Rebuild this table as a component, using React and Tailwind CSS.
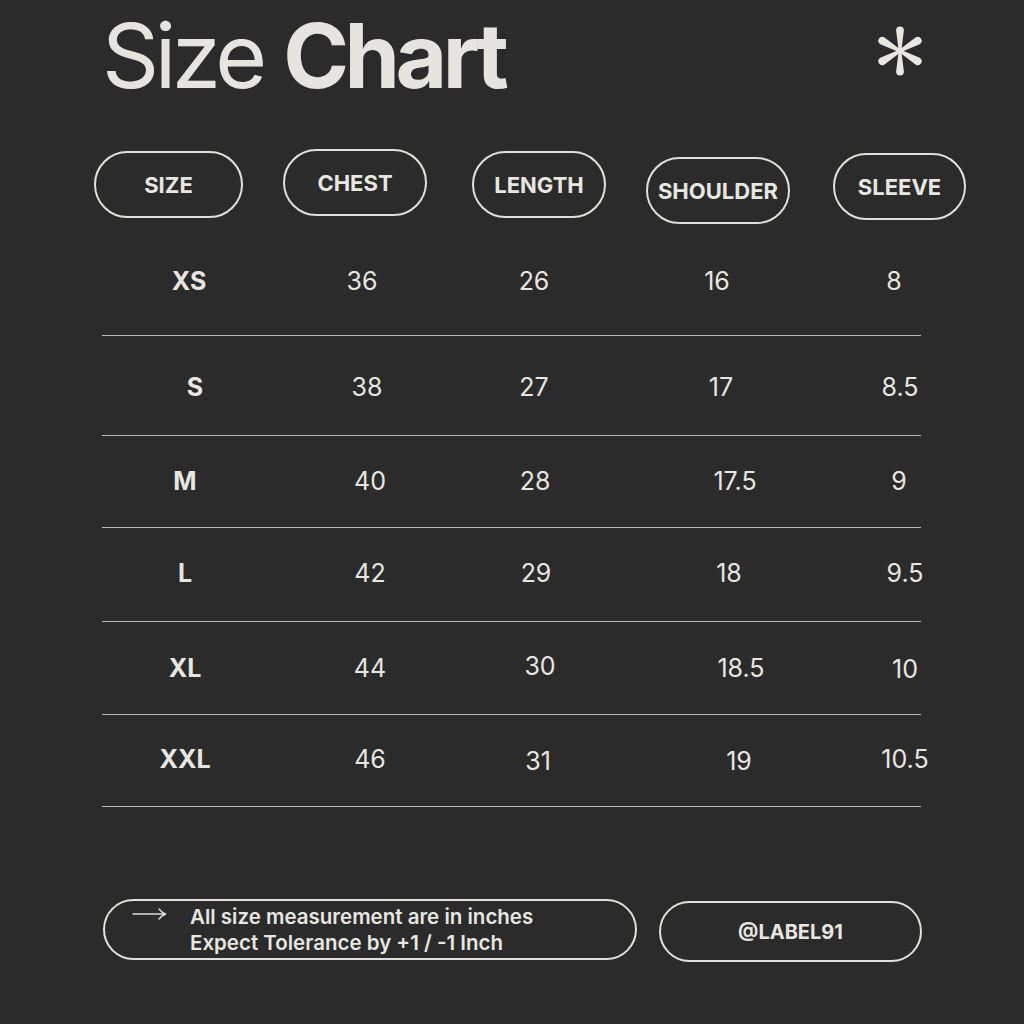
import React from "react";

const rows = [
  {
    h: "h-[109px]",
    cells: [
      ["XS", "translate-x-[4px]"],
      ["36", "-translate-x-[8px]"],
      ["26", "-translate-x-[1px]"],
      ["16", "-translate-x-[13px]"],
      ["8", "-translate-x-[6px]"],
    ],
  },
  {
    h: "h-[100px]",
    cells: [
      ["S", "translate-x-[10px] translate-y-[2px]"],
      ["38", "-translate-x-[3px] translate-y-[2px]"],
      ["27", "-translate-x-[1px] translate-y-[2px]"],
      ["17", "-translate-x-[9px] translate-y-[2px]"],
      ["8.5", "translate-y-[2px]"],
    ],
  },
  {
    h: "h-[92px]",
    cells: [
      ["M", ""],
      ["40", ""],
      ["28", ""],
      ["17.5", "translate-x-[5px]"],
      ["9", "-translate-x-[1px]"],
    ],
  },
  {
    h: "h-[94px]",
    cells: [
      ["L", "-translate-y-[1px]"],
      ["42", "-translate-y-[1px]"],
      ["29", "translate-x-[1px] -translate-y-[1px]"],
      ["18", "-translate-x-[1px] -translate-y-[1px]"],
      ["9.5", "translate-x-[5px] -translate-y-[1px]"],
    ],
  },
  {
    h: "h-[93px]",
    cells: [
      ["XL", ""],
      ["44", ""],
      ["30", "translate-x-[5px] -translate-y-[2px]"],
      ["18.5", "translate-x-[11px]"],
      ["10", "translate-x-[5px] translate-y-[1px]"],
    ],
  },
  {
    h: "h-[92px]",
    cells: [
      ["XXL", "-translate-y-[1px]"],
      ["46", "-translate-y-[1px]"],
      ["31", "translate-x-[3px] translate-y-[1px]"],
      ["19", "translate-x-[9px] translate-y-[1px]"],
      ["10.5", "translate-x-[5px] -translate-y-[1px]"],
    ],
  },
];

function Asterisk() {
  const arm = "M -1.3 0 L -3.9 -20.5 A 3.9 3.9 0 0 1 3.9 -20.5 L 1.3 0 Z";
  return (
    <svg width="44" height="50" viewBox="0 0 44 50" className="mt-[15px] shrink-0">
      <g transform="translate(22 25)" fill="#e8e6e0">
        {[0, 60, 120, 180, 240, 300].map((a) => (
          <path key={a} d={arm} transform={`rotate(${a})`} />
        ))}
        <circle r="2.2" />
      </g>
    </svg>
  );
}

function Pill({ children, cls }) {
  return (
    <div
      className={`h-[67px] rounded-full border-2 border-[#e2e0da] flex items-center justify-center text-[22px] leading-none font-bold text-[#e8e6e0] ${cls}`}
    >
      {children}
    </div>
  );
}

export default function App() {
  return (
    <div
      className="w-[1024px] h-[1024px] bg-[#2b2b2b] overflow-hidden text-[#e8e6e0]"
      style={{ fontFamily: "Inter, 'Noto Sans', sans-serif" }}
    >
      {/* Title */}
      <div className="flex items-start justify-between pl-[102px] pr-[102px] pt-[11px]">
        <h1 className="text-[89px] leading-none tracking-[-0.05em] text-[#e6e4df]">
          <span className="font-normal">Size </span>
          <span className="font-bold">Chart</span>
        </h1>
        <Asterisk />
      </div>

      {/* Header pills */}
      <div className="flex items-start mt-[49px] h-[75px]">
        <Pill cls="ml-[94px] mt-[2px] w-[149px]">SIZE</Pill>
        <Pill cls="ml-[40px] w-[144px]">CHEST</Pill>
        <Pill cls="ml-[45px] mt-[2px] w-[134px]">LENGTH</Pill>
        <Pill cls="ml-[40px] mt-[8px] w-[144px]">SHOULDER</Pill>
        <Pill cls="ml-[43px] mt-[4px] w-[133px]">SLEEVE</Pill>
      </div>

      {/* Table */}
      <div className="ml-[102px] mt-[3px] w-[819px]">
        {rows.map((r, i) => (
          <div key={i} className={`${r.h} border-b border-[#bab8b2]`}>
            <div className="grid grid-cols-[166px_204px_126px_264px_76px] h-full items-center">
              {r.cells.map(([t, c], j) => (
                <div
                  key={j}
                  className={`text-center text-[25px] leading-none ${j === 0 ? "font-bold" : "font-normal"} ${c}`}
                >
                  {t}
                </div>
              ))}
            </div>
          </div>
        ))}
      </div>

      {/* Footer */}
      <div className="flex items-start mt-[92px]">
        <div className="ml-[103px] w-[534px] h-[61px] rounded-full border-2 border-[#e2e0da] flex items-center pl-[27px]">
          <div className="flex items-start">
            <svg width="36" height="14" viewBox="0 0 36 14" className="mt-[3px] shrink-0">
              <path
                d="M1 7 H33.5 M27 2 Q30 6 34 7 Q30 8 27 12"
                fill="none"
                stroke="#dcdad4"
                strokeWidth="1.4"
                strokeLinecap="round"
              />
            </svg>
            <div className="ml-[22px] text-[20.5px] leading-[26px] font-semibold text-[#e8e6e0]">
              <div>All size measurement are in inches</div>
              <div>Expect Tolerance by +1 / -1 Inch</div>
            </div>
          </div>
        </div>
        <div className="ml-[22px] mt-[2px] w-[263px] h-[61px] rounded-full border-2 border-[#e2e0da] flex items-center justify-center text-[20px] font-bold leading-none text-[#e8e6e0]">
          @LABEL91
        </div>
      </div>
    </div>
  );
}
